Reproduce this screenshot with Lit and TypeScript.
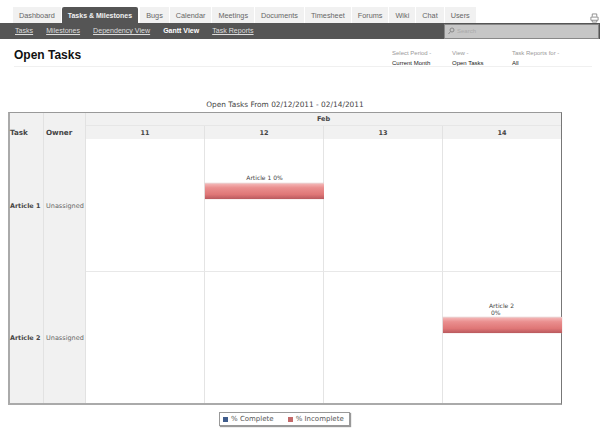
import { LitElement, html, css } from "lit";
import { customElement } from "lit/decorators.js";

@customElement("app-root")
export class AppRoot extends LitElement {
  static styles = css`
    :host { display: block; width: 600px; height: 434px; background: #fff; overflow: hidden; font-family: "Liberation Sans", Arial, sans-serif; color: #333; }
    .top { display: flex; height: 23px; padding: 7px 0 0 13px; box-sizing: border-box; justify-content: space-between; }
    .tabs { display: flex; gap: 1px; }
    .tab { height: 16px; line-height: 17px; font-size: 7.3px; color: #666; background: #f1f1f1; padding: 0 6px; white-space: nowrap; }
    .tab.on { background: #555; color: #f2f2f2; font-weight: bold; font-size: 7px; border-radius: 2px 2px 0 0; margin-right: 1px; }
    .print { margin: 6px 1px 0 0; }
    .sub { display: flex; height: 16px; background: #555; align-items: center; justify-content: space-between; }
    .links { display: flex; gap: 13px; padding-left: 15px; font-size: 7.1px; color: #ddd; }
    .links span { text-decoration: underline; }
    .links .cur { color: #fff; font-weight: bold; font-size: 7px; text-decoration: none; }
    .search { width: 155px; height: 15px; margin-right: 1px; background: #c6c6c6; border: 1px solid #888; box-sizing: border-box; font-size: 6px; color: #aaa; display: flex; align-items: center; gap: 2px; padding-left: 3px; }
    .head { display: flex; justify-content: space-between; height: 28px; margin: 0 8px 0 14px; border-bottom: 1px solid #f0f0f0; box-sizing: border-box; }
    h1 { margin: 8px 0 0; font-size: 12px; line-height: 16px; color: #111; }
    .filters { display: flex; margin-top: 9px; margin-right: 1px; font-size: 6px; line-height: 10px; }
    .filter { color: #222; }
    .filter b { display: block; font-weight: normal; color: #999; }
    .f1 { width: 60px; } .f2 { width: 60px; } .f3 { width: 79px; }
    .title { margin: 31px 0 0 8px; height: 14px; width: 554px; text-align: center; font: 7.4px/14px "DejaVu Sans", Verdana, sans-serif; color: #444; }
    .chart { margin-left: 8px; width: 554px; height: 293px; box-sizing: border-box; border-style: solid; border-width: 1px 1px 2px 2px; border-color: #999 #777 #aaa #aaa; display: grid; grid-template-columns: 34px 42px 119px 119px 119px 118px; grid-template-rows: 13px 13px 133px 131px; font-family: "DejaVu Sans", Verdana, sans-serif; color: #444; }
    .c { box-sizing: border-box; background: #f1f1f1; border-right: 1px solid #e2e2e2; display: flex; align-items: center; white-space: nowrap; }
    .hd { grid-row: span 2; font-size: 7.2px; font-weight: bold; align-items: flex-end; padding: 0 0 2px 0; }
    .hd.own { padding-left: 2px; }
    .month { grid-column: span 4; justify-content: center; font-size: 6.5px; font-weight: bold; border-bottom: 1px solid #e6e6e6; border-right: 0; }
    .day { justify-content: center; font-size: 6.5px; font-weight: bold; }
    .day.last { border-right: 0; }
    .name { font-size: 6.4px; font-weight: bold; }
    .owner { font-size: 6.5px; color: #666; padding-left: 2px; }
    .cell { box-sizing: border-box; border-right: 1px solid #e4e4e4; position: relative; background: #fff; }
    .cell.last { border-right: 0; }
    .r1 { border-bottom: 1px solid #e8e8e8; }
    .task { position: absolute; left: 0; right: -1px; }
    .t1 { top: 35px; }
    .t2 { top: 30px; }
    .label { font-size: 6px; line-height: 8px; color: #444; text-align: center; height: 9px; }
    .t2 .label { height: 15px; line-height: 7px; text-align: left; padding-left: 46px; }
    .bar { height: 16px; box-sizing: border-box; background: linear-gradient(#f3b3b3 0%, #ea8f8f 25%, #df7676 70%, #b9595e 100%); border-top: 1px solid #edc8c8; box-shadow: 0 0 1px #d8b0b0; }
    .legend { margin: 7px 0 0 219px; width: 131px; height: 14px; box-sizing: border-box; border: 1px solid #999; box-shadow: 1px 1px 1px #999; display: flex; align-items: center; font: 7px "DejaVu Sans", Verdana, sans-serif; color: #555; padding-left: 3px; white-space: nowrap; }
    .sw { width: 5px; height: 5px; margin-right: 3px; }
    .blue { background: #3f5c8c; } .red { background: #c46a6a; margin-left: 14px; }
  `;

  render() {
    const tabs = ["Dashboard", "Tasks & Milestones", "Bugs", "Calendar", "Meetings", "Documents", "Timesheet", "Forums", "Wiki", "Chat", "Users"];
    const row = (name: string, taskAt: number, cls: string, label: unknown, rowCls: string) => html`
      <div class="c name">${name}</div>
      <div class="c owner">Unassigned</div>
      ${[0, 1, 2, 3].map(
        (i) => html`<div class="cell ${rowCls} ${i === 3 ? "last" : ""}">
          ${i === taskAt ? html`<div class="task ${cls}"><div class="label">${label}</div><div class="bar"></div></div>` : ""}
        </div>`
      )}
    `;
    return html`
      <div class="top">
        <div class="tabs">${tabs.map((t, i) => html`<div class="tab ${i === 1 ? "on" : ""}">${t}</div>`)}</div>
        <svg class="print" width="9" height="10" viewBox="0 0 10 11" fill="none" stroke="#888" stroke-width="1">
          <path d="M2.5 4V1h5v3M1 4.5h8v3.5H1zM2.5 8v2h5V8" />
        </svg>
      </div>
      <div class="sub">
        <div class="links">
          <span>Tasks</span><span>Milestones</span><span>Dependency View</span><span class="cur">Gantt View</span><span>Task Reports</span>
        </div>
        <div class="search">
          <svg width="7" height="8" viewBox="0 0 7 8" fill="none" stroke="#888"><circle cx="4" cy="3" r="2" /><path d="M2.5 4.5L.5 7" /></svg>
          Search
        </div>
      </div>
      <div class="head">
        <h1>Open Tasks</h1>
        <div class="filters">
          <div class="filter f1"><b>Select Period -</b>Current Month</div>
          <div class="filter f2"><b>View -</b>Open Tasks</div>
          <div class="filter f3"><b>Task Reports for -</b>All</div>
        </div>
      </div>
      <div class="title">Open Tasks From 02/12/2011 - 02/14/2011</div>
      <div class="chart">
        <div class="c hd">Task</div>
        <div class="c hd own">Owner</div>
        <div class="c month">Feb</div>
        ${["11", "12", "13", "14"].map((d, i) => html`<div class="c day ${i === 3 ? "last" : ""}">${d}</div>`)}
        ${row("Article 1", 1, "t1", "Article 1 0%", "r1")}
        ${row("Article 2", 3, "t2", html`Article 2<br />&nbsp;0%`, "")}
      </div>
      <div class="legend">
        <span class="sw blue"></span><span>% Complete</span><span class="sw red"></span><span>% Incomplete</span>
      </div>
    `;
  }
}
